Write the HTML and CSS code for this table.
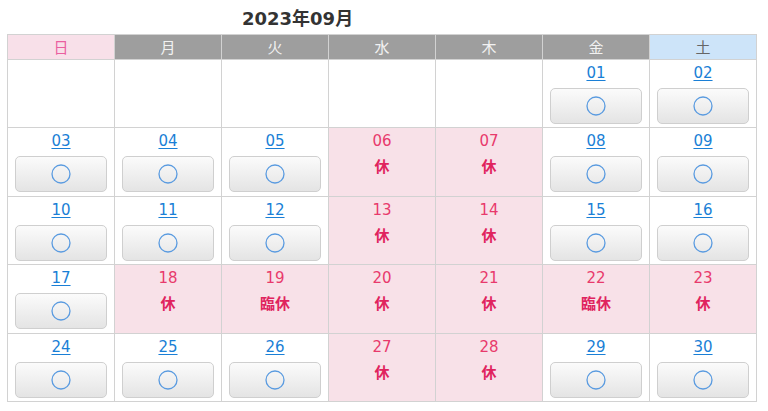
FILE: index.html
```html
<!DOCTYPE html>
<html lang="ja">
<head>
<meta charset="utf-8">
<title>2023年09月</title>
<link rel="stylesheet" href="styles.css">
</head>
<body>
<div class="wrap">
  <h2 class="title">2023年09月</h2>
  <div class="cal">
    <div class="hd sun">日</div>
    <div class="hd">月</div>
    <div class="hd">火</div>
    <div class="hd">水</div>
    <div class="hd">木</div>
    <div class="hd">金</div>
    <div class="hd sat">土</div>

    <div class="cell"></div>
    <div class="cell"></div>
    <div class="cell"></div>
    <div class="cell"></div>
    <div class="cell"></div>
    <div class="cell"><a class="num" href="#">01</a><button class="btn"><svg viewBox="0 0 20 20" width="20" height="20"><circle cx="10" cy="10" r="9" /></svg></button></div>
    <div class="cell"><a class="num" href="#">02</a><button class="btn"><svg viewBox="0 0 20 20" width="20" height="20"><circle cx="10" cy="10" r="9" /></svg></button></div>

    <div class="cell"><a class="num" href="#">03</a><button class="btn"><svg viewBox="0 0 20 20" width="20" height="20"><circle cx="10" cy="10" r="9" /></svg></button></div>
    <div class="cell"><a class="num" href="#">04</a><button class="btn"><svg viewBox="0 0 20 20" width="20" height="20"><circle cx="10" cy="10" r="9" /></svg></button></div>
    <div class="cell"><a class="num" href="#">05</a><button class="btn"><svg viewBox="0 0 20 20" width="20" height="20"><circle cx="10" cy="10" r="9" /></svg></button></div>
    <div class="cell off"><span class="num">06</span><span class="rest">休</span></div>
    <div class="cell off"><span class="num">07</span><span class="rest">休</span></div>
    <div class="cell"><a class="num" href="#">08</a><button class="btn"><svg viewBox="0 0 20 20" width="20" height="20"><circle cx="10" cy="10" r="9" /></svg></button></div>
    <div class="cell"><a class="num" href="#">09</a><button class="btn"><svg viewBox="0 0 20 20" width="20" height="20"><circle cx="10" cy="10" r="9" /></svg></button></div>

    <div class="cell"><a class="num" href="#">10</a><button class="btn"><svg viewBox="0 0 20 20" width="20" height="20"><circle cx="10" cy="10" r="9" /></svg></button></div>
    <div class="cell"><a class="num" href="#">11</a><button class="btn"><svg viewBox="0 0 20 20" width="20" height="20"><circle cx="10" cy="10" r="9" /></svg></button></div>
    <div class="cell"><a class="num" href="#">12</a><button class="btn"><svg viewBox="0 0 20 20" width="20" height="20"><circle cx="10" cy="10" r="9" /></svg></button></div>
    <div class="cell off"><span class="num">13</span><span class="rest">休</span></div>
    <div class="cell off"><span class="num">14</span><span class="rest">休</span></div>
    <div class="cell"><a class="num" href="#">15</a><button class="btn"><svg viewBox="0 0 20 20" width="20" height="20"><circle cx="10" cy="10" r="9" /></svg></button></div>
    <div class="cell"><a class="num" href="#">16</a><button class="btn"><svg viewBox="0 0 20 20" width="20" height="20"><circle cx="10" cy="10" r="9" /></svg></button></div>

    <div class="cell"><a class="num" href="#">17</a><button class="btn"><svg viewBox="0 0 20 20" width="20" height="20"><circle cx="10" cy="10" r="9" /></svg></button></div>
    <div class="cell off"><span class="num">18</span><span class="rest">休</span></div>
    <div class="cell off"><span class="num">19</span><span class="rest">臨休</span></div>
    <div class="cell off"><span class="num">20</span><span class="rest">休</span></div>
    <div class="cell off"><span class="num">21</span><span class="rest">休</span></div>
    <div class="cell off"><span class="num">22</span><span class="rest">臨休</span></div>
    <div class="cell off"><span class="num">23</span><span class="rest">休</span></div>

    <div class="cell"><a class="num" href="#">24</a><button class="btn"><svg viewBox="0 0 20 20" width="20" height="20"><circle cx="10" cy="10" r="9" /></svg></button></div>
    <div class="cell"><a class="num" href="#">25</a><button class="btn"><svg viewBox="0 0 20 20" width="20" height="20"><circle cx="10" cy="10" r="9" /></svg></button></div>
    <div class="cell"><a class="num" href="#">26</a><button class="btn"><svg viewBox="0 0 20 20" width="20" height="20"><circle cx="10" cy="10" r="9" /></svg></button></div>
    <div class="cell off"><span class="num">27</span><span class="rest">休</span></div>
    <div class="cell off"><span class="num">28</span><span class="rest">休</span></div>
    <div class="cell"><a class="num" href="#">29</a><button class="btn"><svg viewBox="0 0 20 20" width="20" height="20"><circle cx="10" cy="10" r="9" /></svg></button></div>
    <div class="cell"><a class="num" href="#">30</a><button class="btn"><svg viewBox="0 0 20 20" width="20" height="20"><circle cx="10" cy="10" r="9" /></svg></button></div>
  </div>
</div>
</body>
</html>
```
FILE: styles.css
```css
html, body {
  margin: 0;
  padding: 0;
  background: #ffffff;
}

body {
  font-family: "DejaVu Sans", "Noto Sans CJK JP", sans-serif;
  color: #333333;
}

.wrap {
  padding-left: 7px;
}

.title {
  margin: 0;
  height: 34px;
  box-sizing: border-box;
  padding-top: 7px;
  padding-left: 235px;
  font-size: 18px;
  line-height: 24px;
  font-weight: bold;
  color: #333333;
}

.cal {
  display: grid;
  grid-template-columns: repeat(7, 106px);
  grid-template-rows: 24px repeat(5, 67.4px);
  gap: 1px;
  padding: 1px;
  width: 750px;
  box-sizing: border-box;
  background: #d2d2d2;
}

.hd {
  background: #9e9e9e;
  color: #f2f2f2;
  font-family: "Noto Sans CJK JP", sans-serif;
  font-size: 15px;
  line-height: 24px;
  text-align: center;
}

.hd.sun {
  background: #f8e0e9;
  color: #ea5fa0;
}

.hd.sat {
  background: #cde4f9;
  color: #666666;
}

.cell {
  background: #ffffff;
  display: flex;
  flex-direction: column;
  align-items: center;
  padding-top: 2px;
  box-sizing: border-box;
}

.cell.off {
  background: #f8e1e8;
}

.num {
  display: block;
  height: 22px;
  font-size: 15px;
  line-height: 22px;
  color: #1a7fd6;
  text-decoration: underline;
  text-underline-offset: 2px;
}

.off .num {
  color: #e83a6c;
  text-decoration: none;
}

.rest {
  display: block;
  margin-top: 4px;
  font-family: "Noto Sans CJK JP", sans-serif;
  font-size: 15px;
  font-weight: bold;
  line-height: 20px;
  color: #e0245e;
}

.btn {
  margin-top: 4px;
  width: 92px;
  height: 36px;
  border: 1px solid #cfcfcf;
  border-radius: 5px;
  background: linear-gradient(#fbfbfb, #e4e4e4);
  display: flex;
  align-items: center;
  justify-content: center;
  padding: 0;
  cursor: pointer;
}

.btn svg {
  display: block;
}

.btn circle {
  fill: none;
  stroke: #5a9be0;
  stroke-width: 1.3;
}
```
